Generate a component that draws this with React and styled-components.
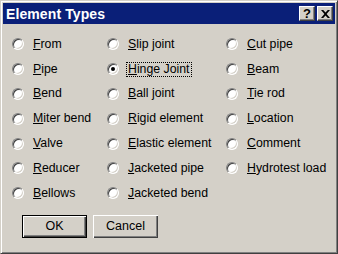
import React from "react";
import styled, { createGlobalStyle } from "styled-components";

const Global = createGlobalStyle`
  html, body { margin: 0; padding: 0; background: #d4d0c8; }
  body { font-family: "Liberation Sans", Arial, sans-serif; }
`;

const Window = styled.div`
  box-sizing: border-box;
  width: 338px;
  height: 254px;
  background: #d4d0c8;
  border-top: 1px solid #d4d0c8;
  border-left: 1px solid #d4d0c8;
  border-right: 1px solid #404040;
  border-bottom: 1px solid #404040;
  box-shadow: inset 1px 1px #ffffff, inset -1px -1px #808080;
  padding: 2px;
  display: flex;
  flex-direction: column;
`;

const TitleBar = styled.div`
  height: 21px;
  background: #0a1f78;
  display: flex;
  align-items: center;
  padding: 0 2px 0 3px;
`;

const Title = styled.div`
  flex: 1;
  color: #fff;
  font-weight: bold;
  font-size: 14px;
  letter-spacing: 0.1px;
`;

const CapButton = styled.div`
  box-sizing: border-box;
  width: 16px;
  height: 15px;
  margin-left: ${(p) => (p.$gap ? "2px" : "0")};
  background: #d4d0c8;
  border-top: 1px solid #fff;
  border-left: 1px solid #fff;
  border-right: 1px solid #404040;
  border-bottom: 1px solid #404040;
  box-shadow: inset -1px -1px #808080;
  display: flex;
  align-items: center;
  justify-content: center;
  color: #000;
  font-weight: bold;
  font-size: 13px;
  line-height: 1;
`;

const Content = styled.div`
  padding: 8px 0 0 9px;
`;

const Grid = styled.div`
  display: grid;
  grid-template-columns: 95px 119px 1fr;
  grid-template-rows: repeat(7, 24.8px);
  grid-auto-flow: column;
`;

const Option = styled.div`
  display: flex;
  align-items: center;
  font-size: 12.3px;
  color: #000;
  white-space: nowrap;
`;

const Radio = styled.span`
  box-sizing: border-box;
  width: 12px;
  height: 12px;
  border-radius: 50%;
  background: #fff;
  border: 1px solid;
  border-color: #808080 #ffffff #ffffff #808080;
  box-shadow: inset 1px 1px 0 #404040, inset -1px -1px 0 #d4d0c8;
  display: flex;
  align-items: center;
  justify-content: center;
  margin-right: 9px;
  flex: none;
  &::after {
    content: "";
    width: 4px;
    height: 4px;
    border-radius: 50%;
    background: ${(p) => (p.$checked ? "#000" : "transparent")};
  }
`;

const Label = styled.span`
  padding: 0 1px;
  margin-left: -1px;
  outline: ${(p) => (p.$focus ? "1px dotted #000" : "none")};
  line-height: 13px;
`;

const U = styled.u`
  text-decoration: underline;
  text-underline-offset: 1px;
`;

const ButtonRow = styled.div`
  display: flex;
  gap: 6px;
  padding: 9px 0 0 10px;
`;

const Button = styled.button`
  box-sizing: border-box;
  width: 65px;
  height: 23px;
  background: #d4d0c8;
  font-family: "Liberation Sans", Arial, sans-serif;
  font-size: 12.5px;
  color: #000;
  padding: 0;
  border: ${(p) => (p.$default ? "1px solid #000" : "none")};
  box-shadow: inset 1px 1px #fff, inset -1px -1px #404040, inset -2px -2px #808080;
`;

const cols = [
  ["From", "Pipe", "Bend", "Miter bend", "Valve", "Reducer", "Bellows"],
  ["Slip joint", "Hinge Joint", "Ball joint", "Rigid element", "Elastic element", "Jacketed pipe", "Jacketed bend"],
  ["Cut pipe", "Beam", "Tie rod", "Location", "Comment", "Hydrotest load"],
];

function Mnemonic({ text }) {
  return (
    <>
      <U>{text[0]}</U>
      {text.slice(1)}
    </>
  );
}

export default function App() {
  return (
    <>
      <Global />
      <Window>
        <TitleBar>
          <Title>Element Types</Title>
          <CapButton>?</CapButton>
          <CapButton $gap>
            <svg width="9" height="8" viewBox="0 0 9 8">
              <path d="M0 0h2.2l2.3 2.6L6.8 0H9L5.6 4 9 8H6.8L4.5 5.4 2.2 8H0l3.4-4z" fill="#000" />
            </svg>
          </CapButton>
        </TitleBar>
        <Content>
          <Grid>
            {cols.flat().map((t) => {
              const checked = t === "Hinge Joint";
              return (
                <Option key={t}>
                  <Radio $checked={checked} />
                  <Label $focus={checked}>
                    <Mnemonic text={t} />
                  </Label>
                </Option>
              );
            })}
          </Grid>
          <ButtonRow>
            <Button $default>OK</Button>
            <Button>Cancel</Button>
          </ButtonRow>
        </Content>
      </Window>
    </>
  );
}
